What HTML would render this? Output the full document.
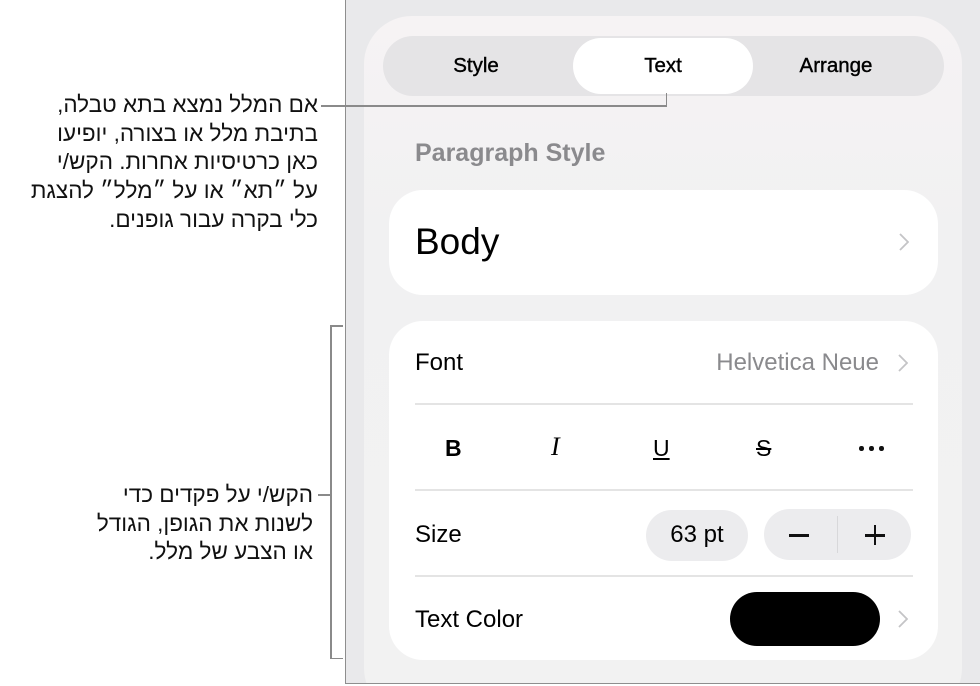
<!DOCTYPE html>
<html><head><meta charset="utf-8"><style>
*{margin:0;padding:0;box-sizing:border-box}
html,body{width:980px;height:686px;overflow:hidden}
body{background:#fff;position:relative;font-family:"Liberation Sans",Arial,sans-serif;color:#000}
.a{position:absolute}
.frame{left:345px;top:-2px;width:635px;height:686px;border:1.5px solid #8e8e8e;border-right:none;background:#e9e9eb;overflow:hidden}
.panel{left:18px;top:17px;width:598px;height:700px;border-radius:48px;background:linear-gradient(180deg,#f6f3f4 0%,#f1f1f2 30%,#f2f2f2 100%)}
.seg{left:383px;top:36px;width:561px;height:60px;border-radius:30px;background:#e5e4e6}
.sel{left:573px;top:38px;width:180px;height:56px;border-radius:28px;background:#fff}
.tab{font-size:20.5px;line-height:24px;top:54px;width:180px;text-align:center;-webkit-text-stroke:0.4px #000}
.card{background:#fff;border-radius:34px}
.div{height:1.5px;background:#e4e4e4;left:415px;width:498px}
.chev{width:10px;height:18px}
.lbl{font-size:24px;line-height:28px}
.he{font-family:"Liberation Sans","Noto Sans CJK JP",sans-serif;direction:rtl;text-align:right;font-size:22.5px;line-height:28.7px;color:#111}
.ln{background:#8a8a8a}
</style></head><body>
<div class="a frame"><div class="a panel"></div></div>
<div class="a seg"></div>
<div class="a sel"></div>
<div class="a tab" style="left:386px">Style</div>
<div class="a tab" style="left:573px">Text</div>
<div class="a tab" style="left:746px">Arrange</div>
<div class="a" style="left:415px;top:139px;font-size:25px;font-weight:bold;color:#8a8a8d;-webkit-text-stroke:0px">Paragraph Style</div>

<div class="a card" style="left:389px;top:190px;width:549px;height:105px"></div>
<div class="a" style="left:415px;top:221px;font-size:37px">Body</div>
<svg class="a chev" style="left:899px;top:233px" viewBox="0 0 10 18"><path d="M1 1l8 8-8 8" fill="none" stroke="#c4c4c6" stroke-width="1.8"/></svg>

<div class="a card" style="left:389px;top:321px;width:549px;height:339px"></div>
<div class="a lbl" style="left:415px;top:349px">Font</div>
<div class="a lbl" style="left:600px;width:279px;text-align:right;top:349px;color:#8a8a8d">Helvetica Neue</div>
<svg class="a chev" style="left:898px;top:354px" viewBox="0 0 10 18"><path d="M1 1l8 8-8 8" fill="none" stroke="#c4c4c6" stroke-width="1.8"/></svg>
<div class="a div" style="top:403px"></div>
<div class="a" style="left:445px;top:435px;font-size:23px;font-weight:bold">B</div>
<div class="a" style="left:551px;top:432px;font-size:26px;font-style:italic;font-family:'Liberation Serif',serif">I</div>
<div class="a" style="left:653px;top:435px;font-size:23px;text-decoration:underline">U</div>
<div class="a" style="left:756px;top:435px;font-size:23px;text-decoration:line-through">S</div>
<div class="a" style="left:859px;top:446px;width:4.5px;height:4.5px;border-radius:50%;background:#111"></div>
<div class="a" style="left:869px;top:446px;width:4.5px;height:4.5px;border-radius:50%;background:#111"></div>
<div class="a" style="left:879px;top:446px;width:4.5px;height:4.5px;border-radius:50%;background:#111"></div>
<div class="a div" style="top:489px"></div>
<div class="a lbl" style="left:415px;top:521px">Size</div>
<div class="a" style="left:646px;top:510px;width:102px;height:51px;border-radius:26px;background:#ececee"></div>
<div class="a lbl" style="left:646px;width:102px;text-align:center;top:521px">63 pt</div>
<div class="a" style="left:764px;top:509px;width:147px;height:51px;border-radius:26px;background:#ececee"></div>
<div class="a" style="left:837px;top:516px;width:1px;height:37px;background:#d8d8da"></div>
<div class="a" style="left:789px;top:534px;width:20px;height:2.5px;background:#111"></div>
<div class="a" style="left:865px;top:534px;width:20px;height:2.5px;background:#111"></div>
<div class="a" style="left:873.7px;top:525px;width:2.5px;height:20px;background:#111"></div>
<div class="a div" style="top:575px"></div>
<div class="a lbl" style="left:415px;top:606px">Text Color</div>
<div class="a" style="left:730px;top:592px;width:150px;height:54px;border-radius:27px;background:#000"></div>
<svg class="a chev" style="left:898px;top:610px" viewBox="0 0 10 18"><path d="M1 1l8 8-8 8" fill="none" stroke="#c4c4c6" stroke-width="1.8"/></svg>

<div class="a he" style="right:662px;top:91px;width:330px">אם המלל נמצא בתא טבלה,<br>בתיבת מלל או בצורה, יופיעו<br>כאן כרטיסיות אחרות. הקש/י<br>על ״תא״ או על ״מלל״ להצגת<br>כלי בקרה עבור גופנים.</div>
<div class="a ln" style="left:321px;top:105px;width:346px;height:1.5px"></div>
<div class="a ln" style="left:665.5px;top:93px;width:1.5px;height:13px"></div>

<div class="a he" style="right:667px;top:481px;width:310px">הקש/י על פקדים כדי<br>לשנות את הגופן, הגודל<br>או הצבע של מלל.</div>
<div class="a ln" style="left:330px;top:325px;width:1.5px;height:334px"></div>
<div class="a ln" style="left:330px;top:325px;width:13px;height:1.5px"></div>
<div class="a ln" style="left:330px;top:657.5px;width:13px;height:1.5px"></div>
<div class="a ln" style="left:318px;top:494px;width:12px;height:1.5px"></div>
</body></html>
